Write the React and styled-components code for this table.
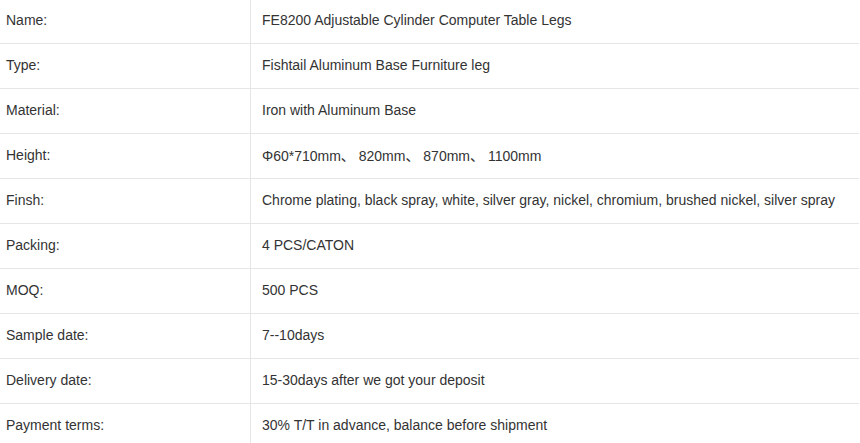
import React from 'react'
import styled, { createGlobalStyle } from 'styled-components'

const rows = [
    ['Name:', 'FE8200 Adjustable Cylinder Computer Table Legs'],
    ['Type:', 'Fishtail Aluminum Base Furniture leg'],
    ['Material:', 'Iron with Aluminum Base'],
    ['Height:', 'Φ60*710mm、 820mm、 870mm、 1100mm'],
    ['Finsh:', 'Chrome plating, black spray, white, silver gray, nickel, chromium, brushed nickel, silver spray'],
    ['Packing:', '4 PCS/CATON'],
    ['MOQ:', '500 PCS'],
    ['Sample date:', '7--10days'],
    ['Delivery date:', '15-30days after we got your deposit'],
    ['Payment terms:', '30% T/T in advance, balance before shipment'],
]

const GlobalStyle = createGlobalStyle`
body {
    margin:0;
    background:#fff;
    overflow:hidden;
}
`

const Table = styled.div`
    width:859px;
    margin-top:-1px;
    font-family:"Liberation Sans", Arial, "Noto Sans CJK SC", sans-serif;
    font-size:14px;
    color:#333;
`

const Row = styled.div`
    display:grid;
    grid-template-columns:250px 1fr;
    height:44px;
    border-bottom:1px solid #e6e6e6;
`

const Cell = styled.div`
    display:flex;
    align-items:center;
    padding-left:${p => p.$value ? '11px' : '6px'};
    padding-bottom:2px;
    border-left:${p => p.$value ? '1px solid #e6e6e6' : 'none'};
    white-space:nowrap;
`

function App() {
    return (
        <>
            <GlobalStyle />
            <Table>
                {rows.map(([label, value]) => (
                    <Row key={label}>
                        <Cell>{label}</Cell>
                        <Cell $value>{value}</Cell>
                    </Row>
                ))}
            </Table>
        </>
    )
}

export default App
